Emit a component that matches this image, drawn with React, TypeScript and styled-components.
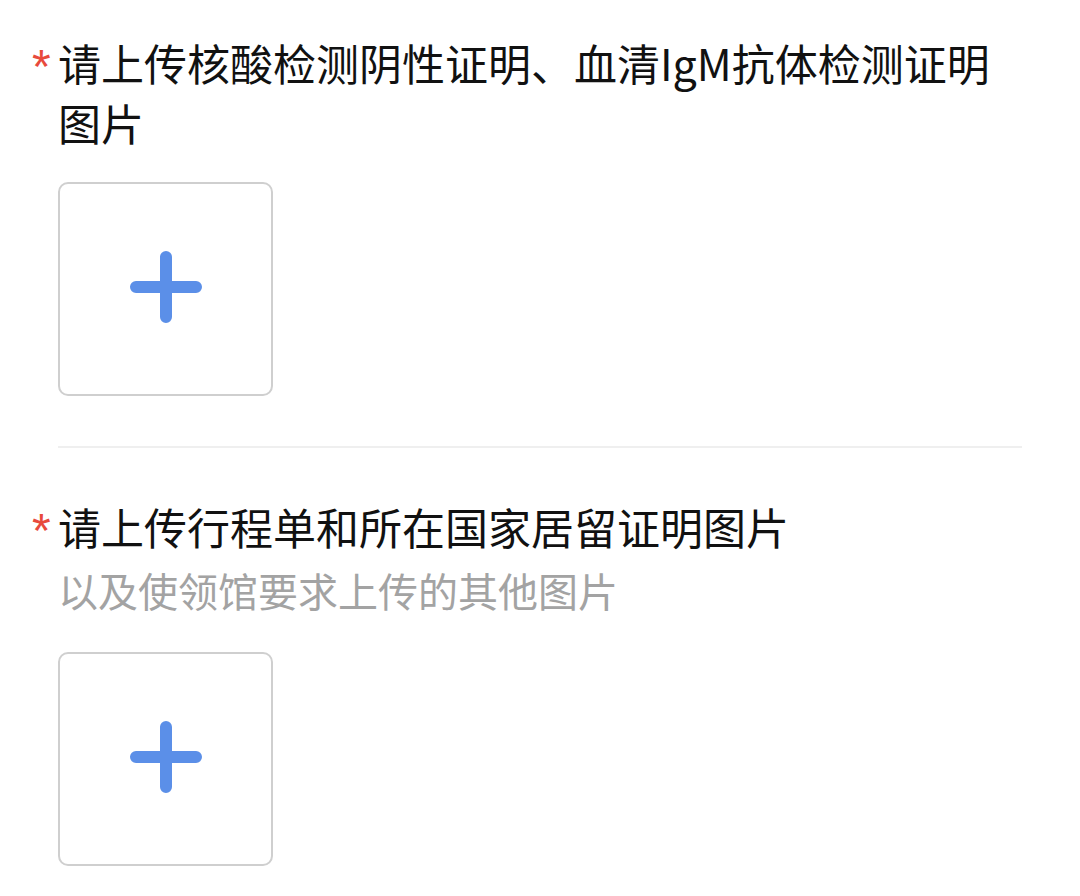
import React from "react";
import styled, { createGlobalStyle } from "styled-components";

const GlobalStyle = createGlobalStyle`
  html, body {
    margin: 0;
    padding: 0;
    background: #ffffff;
  }
  body {
    font-family: "Noto Sans CJK SC", "Noto Sans", sans-serif;
    color: #111111;
  }
`;

const Page = styled.div`
  display: flex;
  flex-direction: column;
  padding: 32px 58px 0 30px;
`;

const Section = styled.section`
  display: flex;
  flex-direction: column;
`;

const Title = styled.div`
  display: flex;
  align-items: flex-start;
  font-size: 43px;
  line-height: 60px;
  color: #111111;
`;

const Required = styled.span`
  flex: 0 0 28px;
  box-sizing: border-box;
  padding-left: 2px;
  color: #e84a3c;
  font-family: "Liberation Sans", sans-serif;
  font-size: 48px;
  line-height: 60px;
  position: relative;
  top: 5px;
`;

const TitleText = styled.span`
  flex: 1;
`;

const Hint = styled.div`
  margin: 4px 0 0 28px;
  font-size: 40px;
  line-height: 60px;
  color: #a3a3a3;
`;

const Uploader = styled.button<{ $top: number }>`
  margin: ${(p) => p.$top}px 0 0 28px;
  width: 215px;
  height: 214px;
  box-sizing: border-box;
  border: 2px solid #cfcfcf;
  border-radius: 10px;
  background: #ffffff;
  display: flex;
  align-items: center;
  justify-content: center;
  padding: 0;
  cursor: pointer;
`;

const Divider = styled.hr`
  margin: 50px 0 48px 28px;
  border: none;
  height: 2px;
  background: #efefef;
`;

const PlusIcon = () => (
  <svg width="76" height="76" viewBox="0 0 76 76" style={{ marginTop: -4 }}>
    <path
      d="M38 8 V68 M8 38 H68"
      stroke="#5b8fe8"
      strokeWidth="12"
      strokeLinecap="round"
      fill="none"
    />
  </svg>
);

export default function App() {
  return (
    <>
      <GlobalStyle />
      <Page>
        <Section>
          <Title>
            <Required>*</Required>
            <TitleText>请上传核酸检测阴性证明、血清IgM抗体检测证明图片</TitleText>
          </Title>
          <Uploader $top={30} aria-label="上传图片">
            <PlusIcon />
          </Uploader>
        </Section>
        <Divider />
        <Section>
          <Title>
            <Required>*</Required>
            <TitleText>请上传行程单和所在国家居留证明图片</TitleText>
          </Title>
          <Hint>以及使领馆要求上传的其他图片</Hint>
          <Uploader $top={32} aria-label="上传图片">
            <PlusIcon />
          </Uploader>
        </Section>
      </Page>
    </>
  );
}
